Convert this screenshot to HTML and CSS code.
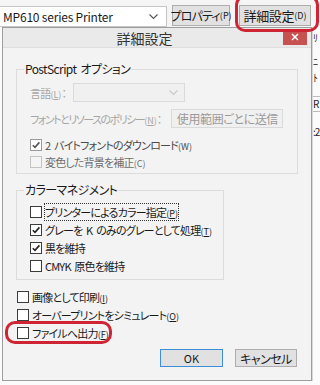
FILE: index.html
```html
<!DOCTYPE html>
<html>
<head>
	<meta charset="utf-8">
	<title>詳細設定</title>
	<link rel="stylesheet" href="styles.css">
</head>
<body>
	<div class="topbar">
		<div class="printer-select">
			<span>MP610 series Printer</span>
			<svg class="chev" width="9" height="6" viewBox="0 0 9 6"><polyline points="0.5,0.5 4.5,4.5 8.5,0.5" fill="none" stroke="#555" stroke-width="1.1"/></svg>
		</div>
		<button class="btn props">プロパティ<span class="ak">(P)</span></button>
		<button class="btn advanced">詳細設定<span class="ak">(D)</span></button>
		<div class="ring ring-top"></div>
	</div>

	<div class="main">
		<div class="side-left"></div>

		<div class="dialog">
			<div class="titlebar">
				<span class="title">詳細設定</span>
				<span class="close">
					<svg width="8" height="8" viewBox="0 0 8 8"><path d="M1 1 L7 7 M7 1 L1 7" stroke="#fff" stroke-width="1.5"/></svg>
				</span>
			</div>

			<div class="dlg-body">
				<fieldset class="group ps">
					<legend>PostScript オプション</legend>
					<div class="field first">
						<span class="lbl disabled">言語<span class="ak">(<u>L</u>)</span>：</span>
						<span class="combo lang">
							<svg class="chev" width="9" height="6" viewBox="0 0 9 6"><polyline points="0.5,0.5 4.5,4.5 8.5,0.5" fill="none" stroke="#c8c8c8" stroke-width="1.1"/></svg>
						</span>
					</div>
					<div class="field">
						<span class="lbl disabled policy-lbl">フォントとリソースのポリシー<span class="ak">(<u>N</u>)</span>：</span>
						<span class="combo policy">
							<span class="combo-text">使用範囲ごとに送信</span>
							<svg class="chev" width="9" height="6" viewBox="0 0 9 6"><polyline points="0.5,0.5 4.5,4.5 8.5,0.5" fill="none" stroke="#c8c8c8" stroke-width="1.1"/></svg>
						</span>
					</div>
					<div class="check-row tight first-check">
						<span class="box grey"><svg width="10" height="10" viewBox="0 0 10 10"><polyline points="1.8,5.2 4,7.4 8.4,2.4" fill="none" stroke="#555" stroke-width="1.6"/></svg></span>
						<span class="semi">2 バイトフォントのダウンロード<span class="ak">(W)</span></span>
					</div>
					<div class="check-row tight">
						<span class="box faint"></span>
						<span class="semi2">変色した背景を補正<span class="ak">(C)</span></span>
					</div>
				</fieldset>

				<fieldset class="group cm">
					<legend>カラーマネジメント</legend>
					<div class="check-row first-check">
						<span class="box"></span>
						<span class="focus">プリンターによるカラー指定<span class="ak">(<u>P</u>)</span></span>
					</div>
					<div class="check-row">
						<span class="box"><svg width="10" height="10" viewBox="0 0 10 10"><polyline points="1.8,5.2 4,7.4 8.4,2.4" fill="none" stroke="#222" stroke-width="1.6"/></svg></span>
						<span>グレーを K のみのグレーとして処理<span class="ak">(<u>T</u>)</span></span>
					</div>
					<div class="check-row">
						<span class="box"><svg width="10" height="10" viewBox="0 0 10 10"><polyline points="1.8,5.2 4,7.4 8.4,2.4" fill="none" stroke="#222" stroke-width="1.6"/></svg></span>
						<span>黒を維持</span>
					</div>
					<div class="check-row">
						<span class="box"></span>
						<span>CMYK 原色を維持</span>
					</div>
				</fieldset>

				<div class="loose">
					<div class="check-row">
						<span class="box"></span>
						<span>画像として印刷<span class="ak">(<u>I</u>)</span></span>
					</div>
					<div class="check-row">
						<span class="box"></span>
						<span>オーバープリントをシミュレート<span class="ak">(<u>O</u>)</span></span>
					</div>
					<div class="check-row">
						<span class="box"></span>
						<span>ファイルへ出力<span class="ak">(<u>F</u>)</span></span>
					</div>
					<div class="ring ring-file"></div>
				</div>

				<div class="actions">
					<button class="btn ok">OK</button>
					<button class="btn cancel">キャンセル</button>
				</div>
			</div>
		</div>

		<div class="side-right">
			<span class="frag f1">ﾘ</span>
			<span class="frag f2">ﾆ</span>
			<span class="frag f3">ﾄ</span>
			<span class="frag f4">R</span>
			<span class="frag f5">:2</span>
		</div>
	</div>
</body>
</html>
```

FILE: styles.css
```css
		html, body {
			margin: 0;
			padding: 0;
		}
		body {
			width: 320px;
			height: 385px;
			overflow: hidden;
			background-color: #fbfbfb;
			font-family: "Noto Sans CJK JP", "Noto Sans", sans-serif;
			font-size: 11px;
			font-feature-settings: "palt";
			letter-spacing: -0.8px;
			word-spacing: 2px;
			color: #1a1a1a;
			position: relative;
		}
		.ak {
			font-size: 9px;
			letter-spacing: 0;
		}
		.ak u {
			text-decoration: underline;
			text-underline-offset: 1px;
		}

		/* top bar of the print dialog */
		.topbar {
			height: 27px;
			display: flex;
			align-items: flex-start;
			background-color: #f5f5f5;
		}
		.printer-select {
			margin-top: 6px;
			width: 167px;
			height: 21px;
			box-sizing: border-box;
			border: 1px solid #c5c5c5;
			border-left: none;
			background-color: #fff;
			display: flex;
			align-items: center;
			justify-content: space-between;
			padding: 0 8px 0 3px;
			font-size: 12px;
			letter-spacing: -0.2px;
			word-spacing: 0;
		}
		.btn {
			font-family: inherit;
			font-feature-settings: "palt";
			font-size: 12px;
			letter-spacing: -0.8px;
			white-space: nowrap;
			color: #1a1a1a;
			background-color: #e1e1e1;
			border: 1px solid #adadad;
			padding: 0;
			margin: 0;
			height: 21px;
			box-sizing: border-box;
			display: flex;
			align-items: center;
			justify-content: center;
		}
		.btn.props {
			margin: 5px 0 0 5px;
			width: 58px;
		}
		.btn.advanced {
			margin: 5px 0 0 9px;
			width: 72px;
			font-size: 13px;
			letter-spacing: -0.3px;
		}
		.ring {
			position: absolute;
			border: 3px solid #cf2434;
			border-radius: 10px;
			z-index: 5;
		}
		.ring-top {
			left: 235px;
			top: -5px;
			width: 78px;
			height: 31px;
		}

		/* main row */
		.main {
			display: flex;
		}
		.side-left {
			width: 2px;
		}
		.dialog {
			width: 310px;
			height: 354px;
			box-sizing: border-box;
			border: 1px solid #9e9e9e;
			background-color: #f3f3f3;
			display: flex;
			flex-direction: column;
		}
		.titlebar {
			height: 20px;
			background-color: #eaeaea;
			display: flex;
			align-items: flex-start;
		}
		.title {
			flex-grow: 1;
			text-align: center;
			font-size: 14px;
			letter-spacing: 0;
			line-height: 20px;
			color: #333;
			padding-left: 3px;
		}
		.close {
			width: 24px;
			height: 16px;
			margin: 1px 4px 0 0;
			background-color: #c75050;
			display: flex;
			align-items: center;
			justify-content: center;
		}
		.dlg-body {
			flex-grow: 1;
			display: flex;
			flex-direction: column;
			align-items: flex-start;
			border-top: 1px solid #dedede;
			margin-top: -1px;
		}

		/* groups */
		.group {
			border: 1px solid #dcdcdc;
			margin: 0 13px 0 13px;
			padding: 0 0 0 13px;
			min-width: 0;
			box-sizing: border-box;
		}
		.group legend {
			font-size: 12px;
			letter-spacing: -0.6px;
			line-height: 16px;
			height: 16px;
			padding: 0 1px;
			margin-left: -6px;
			color: #1a1a1a;
		}
		.group.ps {
			margin-top: 13px;
			width: 282px;
			padding-bottom: 3px;
		}
		.group.cm {
			margin-top: 8px;
			width: 208px;
			padding-bottom: 4px;
		}
		.field {
			display: flex;
			align-items: center;
			height: 19px;
			margin-top: 7px;
		}
		.field.first {
			margin-top: 6px;
		}
		.lbl {
			white-space: nowrap;
		}
		.policy-lbl {
			letter-spacing: -1.5px;
		}
		.disabled {
			color: #a6a6a6;
		}
		.combo {
			height: 19px;
			box-sizing: border-box;
			border: 1px solid #dadada;
			background-color: #f0f0f0;
			display: flex;
			align-items: center;
			justify-content: space-between;
			padding: 0 6px 0 5px;
			color: #9a9a9a;
			font-size: 12px;
			letter-spacing: -0.4px;
			white-space: nowrap;
			overflow: hidden;
			flex-shrink: 0;
		}
		.combo.lang {
			width: 112px;
			margin-left: 7px;
			justify-content: flex-end;
		}
		.combo.policy {
			width: 112px;
			margin-left: 10px;
		}
		.check-row {
			display: flex;
			align-items: center;
			height: 18px;
			white-space: nowrap;
		}
		.check-row.tight {
			height: 17px;
		}
		.check-row.first-check {
			margin-top: 5px;
		}
		.group.ps .check-row.first-check {
			margin-top: 8px;
		}
		.box {
			width: 12px;
			height: 12px;
			box-sizing: border-box;
			border: 1px solid #3c3c3c;
			background-color: #fff;
			margin-right: 3px;
			display: flex;
			align-items: center;
			justify-content: center;
			flex-shrink: 0;
		}
		.box.grey {
			border-color: #9a9a9a;
		}
		.box.faint {
			border-color: #c4c4c4;
			background-color: #f4f4f4;
		}
		.semi {
			color: #4a4a4a;
		}
		.semi2 {
			color: #6e6e6e;
		}
		.focus {
			outline: 1px dotted #333;
			outline-offset: 0;
		}

		.loose {
			margin: 8px 0 0 14px;
			position: relative;
		}
		.ring-file {
			left: -12px;
			top: 33px;
			width: 101px;
			height: 17px;
		}

		.actions {
			align-self: stretch;
			display: flex;
			justify-content: flex-end;
			gap: 12px;
			margin: 7px 14px 0 0;
		}
		.btn.ok {
			width: 63px;
			height: 18px;
			border-color: #3c8fd6;
			font-size: 11px;
			letter-spacing: 0;
		}
		.btn.cancel {
			width: 62px;
			height: 18px;
			font-size: 12px;
			letter-spacing: -0.5px;
		}

		/* bits of the window underneath */
		.side-right {
			width: 7px;
			display: flex;
			flex-direction: column;
			border-left: 1px solid #d8d8d8;
			overflow: hidden;
			font-size: 10px;
			letter-spacing: -1px;
			line-height: 12px;
			color: #222;
		}
		.frag {
			white-space: nowrap;
		}
		.f1 { margin-top: 5px; }
		.f2 { margin-top: 12px; }
		.f3 { margin-top: 4px; }
		.f4 {
			margin-top: 12px;
			border-top: 1px solid #bbb;
			border-bottom: 1px solid #bbb;
			padding: 1px 0;
		}
		.f5 { margin-top: 14px; }
```
